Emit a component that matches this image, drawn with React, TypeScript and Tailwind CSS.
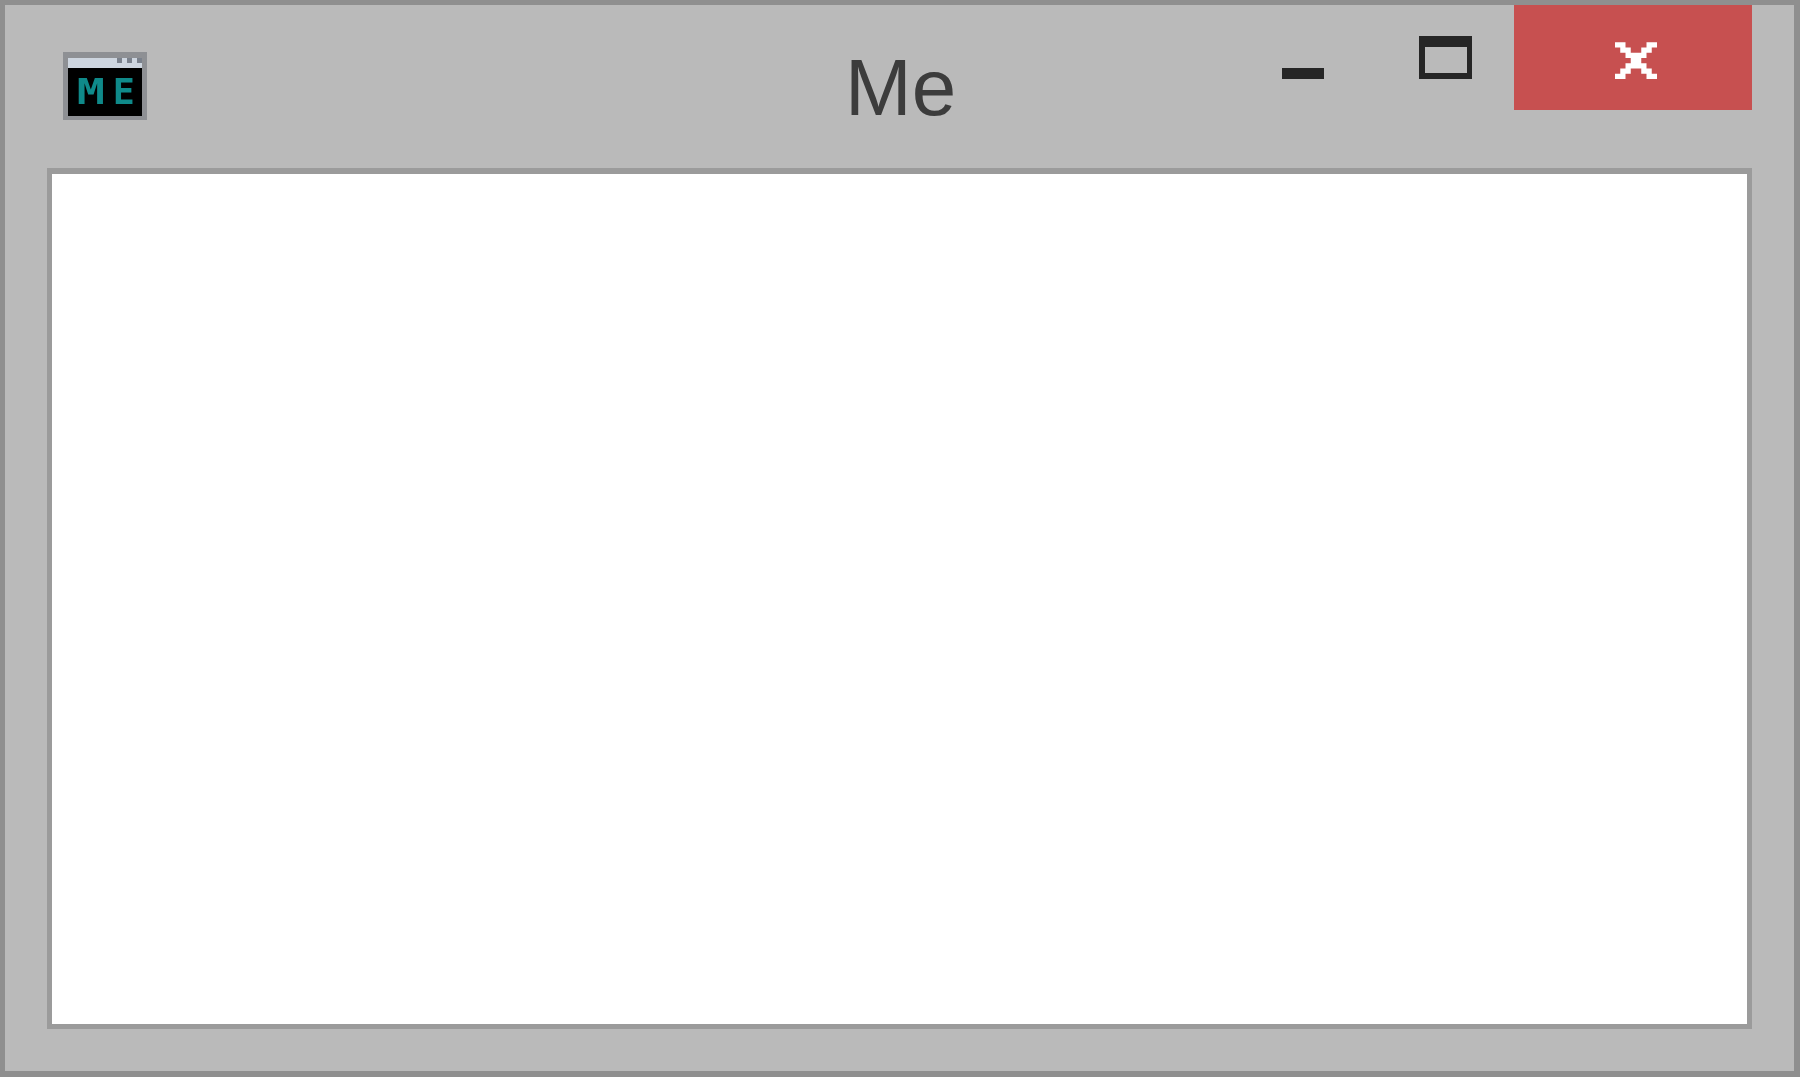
export default function App() {
  const x = ["##....##", ".##..##.", "..####..", "...##...", "..####..", ".##..##.", "##....##"];
  const d = x
    .flatMap((row, r) => row.split("").map((c, i) => (c === "#" ? `M${i} ${r}h1v1h-1z` : "")))
    .join("");
  return (
    <div className="flex h-[1077px] w-[1800px] flex-col overflow-hidden border-t-[5px] border-r-[6px] border-b-[6px] border-l-[5px] border-[#8f8f8f] bg-[#bababa]">
      <div className="flex h-[163px] shrink-0 items-start">
        <div className="mt-[47px] ml-[58px] flex h-[68px] w-[84px] shrink-0 flex-col border-x-[5px] border-t-[6px] border-b-[4px] border-[#8e9094]">
          <div className="flex h-[10px] shrink-0 items-start justify-end gap-[5px] bg-[#cdd5df]">
            <span className="h-[5px] w-[5px] bg-[#7a818c]" />
            <span className="h-[5px] w-[5px] bg-[#7a818c]" />
            <span className="h-[5px] w-[5px] bg-[#7a818c]" />
          </div>
          <div className="flex flex-1 items-center justify-center gap-[11px] bg-black pl-[4px] font-['DejaVu_Sans_Mono',monospace] text-[36px] leading-none font-bold text-[#0f8a8a]">
            <span className="inline-block scale-x-[1.3]">M</span>
            <span className="inline-block scale-x-[1.02]">E</span>
          </div>
        </div>
        <div className="mt-[37px] ml-[698px] w-[130px] shrink-0 font-['Liberation_Sans',sans-serif] text-[80px] leading-[92px] text-[#3c3c3c] blur-[0.7px]">
          Me
        </div>
        <div className="mt-[63px] ml-[307px] h-[11px] w-[42px] shrink-0 bg-[#262626]" />
        <div className="mt-[31px] ml-[95px] h-[43px] w-[53px] shrink-0 border-t-[11px] border-r-[5px] border-b-[6px] border-l-[6px] border-[#262626]" />
        <div className="ml-[42px] flex h-[105px] w-[238px] shrink-0 items-start justify-center bg-[#c75050] pt-[37px] pl-[6px]">
          <svg width="42" height="37" viewBox="0 0 8 7" fill="#ffffff">
            <path d={d} />
          </svg>
        </div>
      </div>
      <div className="mx-[42px] h-[861px] shrink-0 border-x-[5px] border-t-[6px] border-b-[5px] border-[#9b9b9b] bg-white" />
    </div>
  );
}
